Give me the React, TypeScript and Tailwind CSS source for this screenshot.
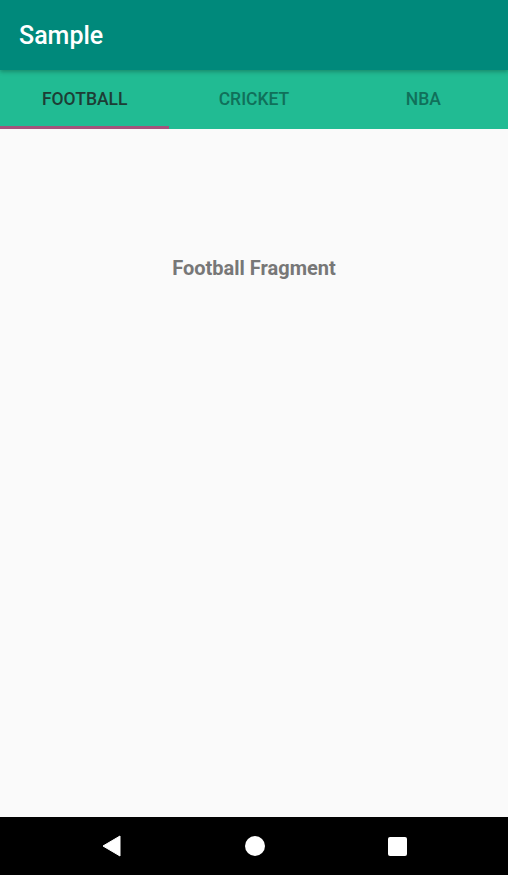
import React, { useState } from 'react';

const tabs = ['FOOTBALL', 'CRICKET', 'NBA'];

export default function App() {
  const [active, setActive] = useState(0);
  const label = ['Football', 'Cricket', 'NBA'][active] + ' Fragment';

  return (
    <div
      className="flex flex-col h-[875px] w-[508px] bg-[#fafafa]"
      style={{ fontFamily: 'Roboto, "Noto Sans", sans-serif' }}
    >
      {/* app bar */}
      <div className="h-[70px] bg-[#00897b] flex items-center px-[19px] pt-[2px] shadow-[0_2px_4px_rgba(0,0,0,0.25)] z-10">
        <span className="text-white text-[25px] font-medium">Sample</span>
      </div>

      {/* tab bar */}
      <div className="h-[59px] bg-[#21bb93] flex">
        {tabs.map((t, i) => (
          <button
            key={t}
            onClick={() => setActive(i)}
            className="flex-1 relative flex items-center justify-center"
          >
            <span
              className={`text-[17.5px] font-medium ${
                i === active ? 'text-[#1d3d35]' : 'text-[#10705a]'
              }`}
            >
              {t}
            </span>
            {i === active && (
              <span className="absolute left-0 right-0 bottom-0 h-[3px] bg-[#a4527c]" />
            )}
          </button>
        ))}
      </div>

      {/* content */}
      <div className="flex-1 flex justify-center pt-[124px]">
        <span className="text-[#777777] text-[20px] font-bold">{label}</span>
      </div>

      {/* nav bar */}
      <div className="h-[58px] bg-black flex items-center justify-center gap-[123px]">
        <svg width="20" height="22" viewBox="0 0 20 22">
          <path d="M18 1 L18 21 L1 11 Z" fill="white" stroke="white" strokeWidth="1" strokeLinejoin="round" />
        </svg>
        <div className="w-[20px] h-[20px] rounded-full bg-white" />
        <div className="w-[19px] h-[19px] rounded-[2px] bg-white" />
      </div>
    </div>
  );
}
